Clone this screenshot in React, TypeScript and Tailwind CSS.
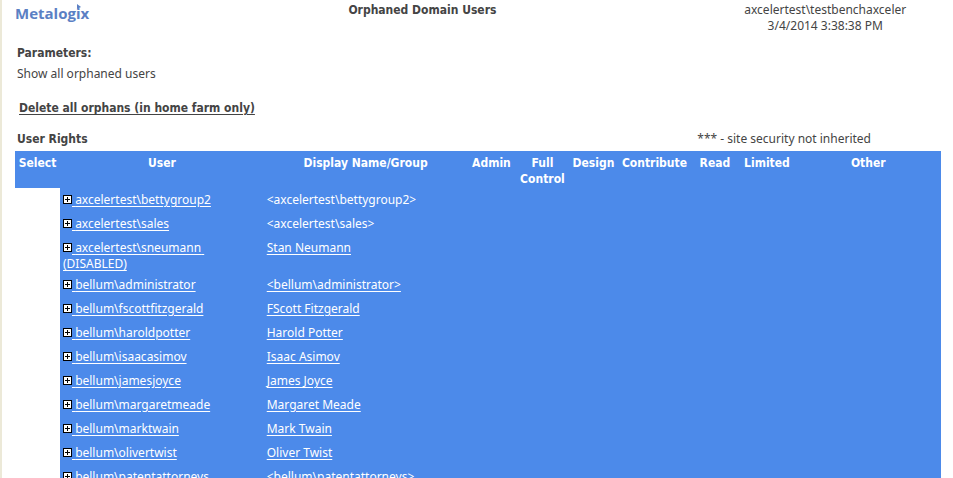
import React from "react";

interface OrphanedUser {
  login: string;
  displayName: string;
  linked: boolean;
  disabled?: boolean;
}

const users: OrphanedUser[] = [
  { login: "axcelertest\\bettygroup2", displayName: "<axcelertest\\bettygroup2>", linked: false },
  { login: "axcelertest\\sales", displayName: "<axcelertest\\sales>", linked: false },
  { login: "axcelertest\\sneumann", displayName: "Stan Neumann", linked: true, disabled: true },
  { login: "bellum\\administrator", displayName: "<bellum\\administrator>", linked: true },
  { login: "bellum\\fscottfitzgerald", displayName: "FScott Fitzgerald", linked: true },
  { login: "bellum\\haroldpotter", displayName: "Harold Potter", linked: true },
  { login: "bellum\\isaacasimov", displayName: "Isaac Asimov", linked: true },
  { login: "bellum\\jamesjoyce", displayName: "James Joyce", linked: true },
  { login: "bellum\\margaretmeade", displayName: "Margaret Meade", linked: true },
  { login: "bellum\\marktwain", displayName: "Mark Twain", linked: true },
  { login: "bellum\\olivertwist", displayName: "Oliver Twist", linked: true },
  { login: "bellum\\patentattorneys", displayName: "<bellum\\patentattorneys>", linked: true },
];

const columns = [
  { label: "Select", width: "w-[45px]" },
  { label: "User", width: "w-[22%]" },
  { label: "Display Name/Group", width: "w-[22%]" },
  { label: "Admin", width: "w-[48px]" },
  { label: "Full Control", width: "w-[54px]" },
  { label: "Design", width: "w-[48px]" },
  { label: "Contribute", width: "w-[74px]" },
  { label: "Read", width: "w-[47px]" },
  { label: "Limited", width: "w-[57px]" },
  { label: "Other", width: "" },
];

const boldText = "font-['DejaVu_Sans_Condensed','DejaVu_Sans',sans-serif] font-bold";

function Logo(): React.JSX.Element {
  return (
    <div className="relative w-fit pt-[3px] font-['Open_Sans',sans-serif] text-[15px] leading-5 font-bold text-[#5b80c4]">
      Metalogix
      <svg className="absolute top-1 right-2 h-[5px] w-[5px]" viewBox="0 0 5 5" aria-hidden="true">
        <path d="M1 0L5 3L1 5Z" fill="#5b80c4" />
      </svg>
    </div>
  );
}

function PlusBox(): React.JSX.Element {
  return (
    <svg
      className="inline-block h-[9px] w-[9px] align-baseline"
      viewBox="0 0 9 9"
      shapeRendering="crispEdges"
      aria-hidden="true"
    >
      <rect width="9" height="9" fill="#000" />
      <rect x="1" y="1" width="7" height="7" fill="#fff" />
      <path d="M2 4h5v1H2zM4 2h1v5H4z" fill="#000" />
    </svg>
  );
}

function UserRow({ login, displayName, linked, disabled }: OrphanedUser): React.JSX.Element {
  return (
    <tr className="h-6 bg-[#4c8aea] align-top">
      <td className="bg-white" />
      <td className="px-[3px] pt-1 pb-px">
        <a href="#" className="underline underline-offset-2">
          <PlusBox />
          {"\u00a0"}
          {login}
          {disabled && (
            <>
              {"\u00a0"}
              <br />
              (DISABLED)
            </>
          )}
        </a>
      </td>
      <td className="px-[3px] pt-1 pb-px">
        {linked ? (
          <a href="#" className="underline underline-offset-2">
            {displayName}
          </a>
        ) : (
          displayName
        )}
      </td>
      <td colSpan={7} />
    </tr>
  );
}

function App(): React.JSX.Element {
  return (
    <div className="relative h-screen overflow-hidden border-l-2 border-[#ece9d8] bg-white pr-3 pl-[13px] font-['Noto_Sans',sans-serif] text-xs leading-4 text-[#444]">
      <div className="absolute top-[256px] -left-[2px] h-7 w-px bg-[#d5d2c6]" />
      <header className="grid grid-cols-[13%_62%_1fr]">
        <Logo />
        <h1 className={`pt-[2px] text-center ${boldText}`}>Orphaned Domain Users</h1>
        <div className="pt-[2px] text-center">
          <p>axcelertest\testbenchaxceler</p>
          <p>3/4/2014 3:38:38 PM</p>
        </div>
      </header>

      <section className="mt-[11px] px-[2px]">
        <h2 className={boldText}>Parameters:</h2>
        <p className="mt-[5px]">Show all orphaned users</p>
        <a href="#" className={`mt-[18px] ml-[2px] inline-block underline underline-offset-2 ${boldText}`}>
          Delete all orphans (in home farm only)
        </a>
      </section>

      <div className="mt-[15px] flex justify-between pr-[70px] pl-[2px]">
        <h2 className={boldText}>User Rights</h2>
        <p>*** - site security not inherited</p>
      </div>

      <table className="mt-1 w-full table-fixed border-collapse text-white">
        <thead>
          <tr className="bg-[#4c8aea] align-top">
            {columns.map((column) => (
              <th key={column.label} className={`${column.width} pt-1 pb-px text-center ${boldText}`}>
                {column.label}
              </th>
            ))}
          </tr>
        </thead>
        <tbody>
          {users.map((user) => (
            <UserRow key={user.login} {...user} />
          ))}
        </tbody>
      </table>
    </div>
  );
}

export default App;
